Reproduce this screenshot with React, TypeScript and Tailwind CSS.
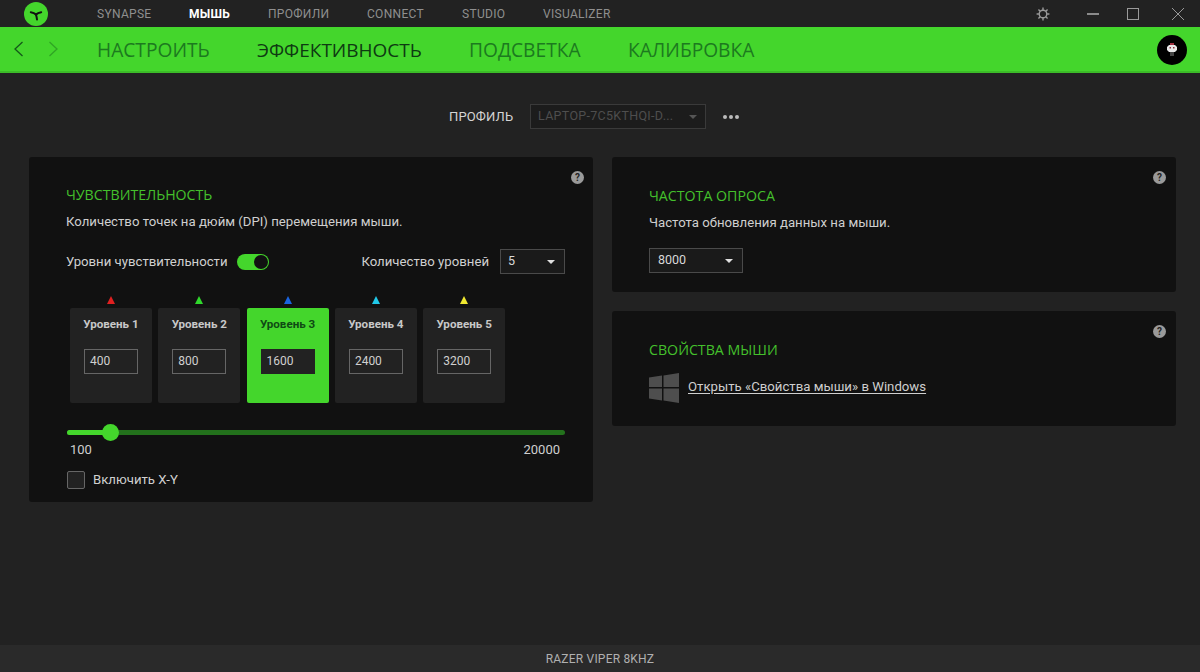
import React from "react";

const head = "font-['Open_Sans','Noto_Sans',sans-serif]";

function Help({ right = false }: { right?: boolean }) {
  return (
    <div className={`absolute ${right ? "right-[10px]" : "right-[9px]"} top-[14px] w-[13px] h-[13px] rounded-full bg-[#9a9a9a] text-[#222] text-[10px] leading-[13px] font-bold text-center`}>?</div>
  );
}

function Caret({ color = "#e0e0e0" }: { color?: string }) {
  return (
    <svg width="8" height="4" viewBox="0 0 8 4"><path d="M0 0h8L4 4z" fill={color} /></svg>
  );
}

const levels = [
  { n: 1, v: "400", c: "#e02020" },
  { n: 2, v: "800", c: "#30d82c" },
  { n: 3, v: "1600", c: "#1a64e0", on: true },
  { n: 4, v: "2400", c: "#20c8e8" },
  { n: 5, v: "3200", c: "#f0e830" },
];

function Level({ n, v, c, on }: { n: number; v: string; c: string; on?: boolean }) {
  return (
    <div className="w-[82px] flex flex-col items-center">
      <svg width="8" height="8" viewBox="0 0 8 8" className="mb-[4px]"><path d="M4 0l4 8H0z" fill={c} /></svg>
      <div className={`w-[82px] h-[95px] rounded-[2px] flex flex-col items-center pt-[8px] ${on ? "bg-[#44d62c]" : "bg-[#222222]"}`}>
        <div className={`text-[11.6px] leading-[16px] font-bold ${on ? "text-[#0f4a14]" : "text-[#c8c8c8]"}`}>Уровень {n}</div>
        <div className={`mt-[17px] w-[54px] h-[25px] border text-[12px] leading-[23px] pl-[5px] text-[#d0d0d0] ${on ? "bg-[#222222] border-[#222222]" : "border-[#666666]"}`}>{v}</div>
      </div>
    </div>
  );
}

export default function App() {
  return (
    <div className="w-[1200px] h-[672px] overflow-hidden bg-[#222222] flex flex-col font-['Roboto',sans-serif] text-[#d0d0d0]">
      <div className="h-[27px] flex items-center bg-[#222222]">
        <div className="w-[24px] h-[24px] ml-[24px] rounded-full bg-[#44d62c] flex items-center justify-center">
          <svg width="16" height="16" viewBox="0 0 16 16" fill="none" stroke="#111" strokeWidth="2" strokeLinecap="round">
            <path d="M8 8.5C6.5 7 5 6.5 2.8 6.2M8 8.5C9.5 7 11 6.5 13.2 6.2M8 8.5C8.4 10 8.8 11.5 9 13.5" />
            <circle cx="8" cy="8.5" r="1.2" fill="#111" stroke="none" />
          </svg>
        </div>
        <div className="ml-[49px] flex items-center text-[12px] tracking-[0.3px] text-[#8f8f8f]">
          <span className="w-[92px]">SYNAPSE</span>
          <span className="w-[79px] text-white font-bold">МЫШЬ</span>
          <span className="w-[99px]">ПРОФИЛИ</span>
          <span className="w-[95px]">CONNECT</span>
          <span className="w-[81px]">STUDIO</span>
          <span>VISUALIZER</span>
        </div>
        <div className="ml-auto flex items-center">
          <svg width="14" height="14" viewBox="0 0 24 24" fill="none" stroke="#999" strokeWidth="2.4" className="mr-[29px]">
            <circle cx="12" cy="12" r="6.5" />
            <path d="M12 1v4M12 19v4M1 12h4M19 12h4M4.2 4.2l2.9 2.9M16.9 16.9l2.9 2.9M4.2 19.8l2.9-2.9M16.9 7.1l2.9-2.9" />
          </svg>
          <div className="w-[12px] h-[2px] bg-[#8a8a8a] mr-[28px] ml-[8px]" />
          <div className="w-[12px] h-[12px] border border-[#9a9a9a] mr-[33px]" />
          <svg width="12" height="12" viewBox="0 0 12 12" stroke="#999" strokeWidth="1" className="mr-[16px]"><path d="M0 0l12 12M12 0L0 12" /></svg>
        </div>
      </div>

      <div className={`h-[46px] bg-[#44d62c] border-b-2 border-[#3cbc28] flex items-center ${head}`}>
        <svg width="12" height="18" viewBox="0 0 12 18" fill="none" stroke="#14581a" strokeWidth="1.3" className="ml-[12px]"><path d="M10.5 2L3 9l7.5 7" /></svg>
        <svg width="12" height="18" viewBox="0 0 12 18" fill="none" stroke="#2fa524" strokeWidth="1.3" className="ml-[24px]"><path d="M1.5 2L9 9l-7.5 7" /></svg>
        <div className="ml-[37px] pt-[2px] flex items-center text-[19.2px] leading-[24px] text-[#1c7a1f]">
          <span className="w-[160px]">НАСТРОИТЬ</span>
          <span className="w-[212px] text-[19px] text-[#0e3a12]">ЭФФЕКТИВНОСТЬ</span>
          <span className="w-[159px]">ПОДСВЕТКА</span>
          <span>КАЛИБРОВКА</span>
        </div>
        <div className="ml-auto mr-[13px] mt-[1px] w-[30px] h-[30px] rounded-full bg-black flex items-center justify-center">
          <svg width="10" height="14" viewBox="0 0 10 14">
            <path d="M2 2h6l2 2v3L8 9H2L0 7V4z" fill="#e8e8e8" />
            <rect x="3" y="0" width="4" height="2" fill="#a03040" />
            <rect x="2.5" y="4" width="1.5" height="1.5" fill="#8a3040" />
            <rect x="6" y="4" width="1.5" height="1.5" fill="#8a3040" />
            <rect x="3" y="9" width="4" height="4" fill="#444" />
          </svg>
        </div>
      </div>

      <div className="flex-1 relative flex flex-col">
        <div className="h-[84px] flex items-center pt-[3px] pl-[449px]">
          <span className="text-[13px] tracking-[0.15px] text-[#d4d4d4] w-[81px]">ПРОФИЛЬ</span>
          <div className="w-[176px] h-[25px] border border-[#3a3a3a] bg-[#1c1c1c] flex items-center pl-[7px] pr-[8px] text-[12.5px] text-[#4e4e4e] justify-between">
            <span className="tracking-[0.3px]">LAPTOP-7C5KTHQI-D...</span>
            <Caret color="#555" />
          </div>
          <div className="ml-[17px] flex gap-[2px]">
            <span className="w-[4px] h-[4px] rounded-full bg-[#bbb]" />
            <span className="w-[4px] h-[4px] rounded-full bg-[#bbb]" />
            <span className="w-[4px] h-[4px] rounded-full bg-[#bbb]" />
          </div>
        </div>

        <div className="flex gap-[19px] pl-[29px]">
          <div className="relative w-[564px] h-[345px] bg-[#111111] rounded-[3px] pt-[28px] pl-[37px] pr-[28px]">
            <Help />
            <div className={`text-[14.2px] leading-[19px] text-[#44c02c] ${head}`}>ЧУВСТВИТЕЛЬНОСТЬ</div>
            <div className="mt-[9px] text-[13.2px] leading-[18px] text-[#cfcfcf]">Количество точек на дюйм (DPI) перемещения мыши.</div>
            <div className="mt-[18px] h-[25px] flex items-center text-[13.2px]">
              <span>Уровни чувствительности</span>
              <div className="ml-[9px] w-[32px] h-[16px] rounded-full bg-[#44d62c] flex items-center justify-end pr-[1px]">
                <div className="w-[14px] h-[14px] rounded-full bg-[#111111]" />
              </div>
              <span className="ml-auto">Количество уровней</span>
              <div className="ml-[11px] w-[65px] h-[25px] border border-[#4a4a4a] flex items-center justify-between pl-[7px] pr-[9px] bg-[#1a1a1a] text-[#d8d8d8] text-[12.5px]">
                <span>5</span>
                <Caret />
              </div>
            </div>
            <div className="mt-[22px] ml-[4px] flex gap-[6.3px]">
              {levels.map((l) => <Level key={l.n} {...l} />)}
            </div>
            <div className="mt-[27px] ml-[1px] relative h-[5px] rounded-full bg-[#23711c]">
              <div className="h-[5px] w-[44px] rounded-full bg-[#44d62c]" />
              <div className="absolute left-[35px] top-[-6px] w-[17px] h-[17px] rounded-full bg-[#44d62c]" />
            </div>
            <div className="mt-[6px] pl-[4px] pr-[5px] flex justify-between text-[13px] leading-[18px] text-[#cfcfcf]">
              <span>100</span>
              <span>20000</span>
            </div>
            <div className="mt-[11px] ml-[1px] flex items-center text-[13.2px]">
              <div className="w-[18px] h-[18px] rounded-[2px] border border-[#666] bg-[#222222]" />
              <span className="ml-[8px]">Включить X-Y</span>
            </div>
          </div>

          <div className="flex flex-col gap-[19px]">
            <div className="relative w-[564px] h-[135px] bg-[#111111] rounded-[3px] pt-[29px] pl-[37px]">
              <Help right />
              <div className={`text-[14.2px] leading-[19px] text-[#44c02c] ${head}`}>ЧАСТОТА ОПРОСА</div>
              <div className="mt-[9px] text-[13.2px] leading-[18px] text-[#cfcfcf]">Частота обновления данных на мыши.</div>
              <div className="mt-[16px] w-[94px] h-[25px] border border-[#4a4a4a] flex items-center justify-between pl-[8px] pr-[9px] bg-[#1a1a1a] text-[#d8d8d8] text-[12.5px]">
                <span>8000</span>
                <Caret />
              </div>
            </div>
            <div className="relative w-[564px] h-[115px] bg-[#111111] rounded-[3px] pt-[29px] pl-[37px]">
              <Help right />
              <div className={`text-[14.2px] leading-[19px] text-[#44c02c] ${head}`}>СВОЙСТВА МЫШИ</div>
              <div className="mt-[14px] flex items-center">
                <svg width="30" height="30" viewBox="0 0 30 30" fill="#4e4e4e">
                  <path d="M0 4.5L13 2.6V14H0zM14.5 2.4L30 0V14H14.5zM0 15.5H13V27.4L0 25.5zM14.5 15.5H30V30L14.5 27.6z" />
                </svg>
                <span className="ml-[9px] mb-[2px] text-[13.2px] underline underline-offset-2 text-[#cfcfcf]">Открыть «Свойства мыши» в Windows</span>
              </div>
            </div>
          </div>
        </div>

        <div className="mt-auto h-[27px] bg-[#2a2a2a] flex items-center justify-center text-[12px] tracking-[0.2px] text-[#b0b0b0]">RAZER VIPER 8KHZ</div>
      </div>
    </div>
  );
}
